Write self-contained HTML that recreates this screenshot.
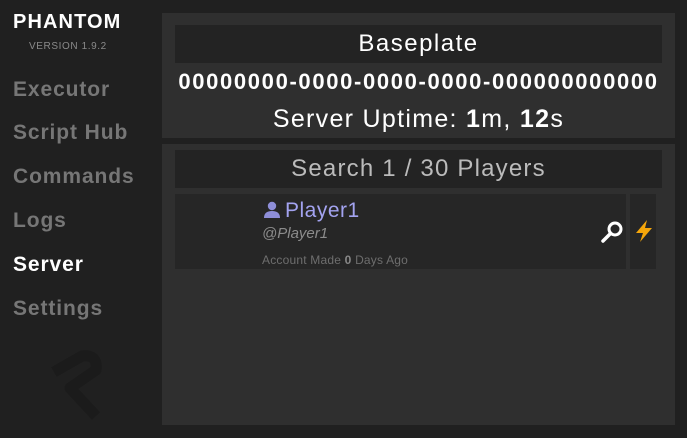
<!DOCTYPE html><html><head><style>
body{margin:0;width:687px;height:438px;background:#202020;font-family:"Liberation Sans",sans-serif;position:relative;overflow:hidden}
.a{position:absolute}
.nav{left:13px;font-size:21px;font-weight:bold;color:#767676;letter-spacing:0.9px}
</style></head><body>
<div class="a" style="left:13px;top:11px;font-size:20px;font-weight:bold;color:#fff;letter-spacing:1.1px">PHANTOM</div>
<div class="a" style="left:29px;top:41px;font-size:10px;color:#8a8a8a;letter-spacing:0.6px">VERSION 1.9.2</div>
<div class="a nav" style="top:78px">Executor</div>
<div class="a nav" style="top:121px">Script Hub</div>
<div class="a nav" style="top:165px">Commands</div>
<div class="a nav" style="top:209px">Logs</div>
<div class="a nav" style="top:253px;color:#fff">Server</div>
<div class="a nav" style="top:297px">Settings</div>
<svg class="a" style="left:40px;top:340px" width="70" height="85"><path d="M14 32 L42 16 Q58 14 56 30 L30 48 L56 76" stroke="#1b1b1b" stroke-width="11" fill="none" stroke-linejoin="round"/></svg>
<div class="a" style="left:162px;top:13px;width:513px;height:125px;background:#2f2f2f"></div>
<div class="a" style="left:175px;top:25px;width:487px;height:38px;background:#232323;color:#fff;font-size:24px;text-align:center;line-height:38px;letter-spacing:1.5px">Baseplate</div>
<div class="a" style="left:162px;top:69px;width:513px;text-align:center;color:#fff;font-size:22px;font-weight:bold;letter-spacing:1.65px">00000000-0000-0000-0000-000000000000</div>
<div class="a" style="left:162px;top:105px;width:513px;text-align:center;color:#fff;font-size:25px;letter-spacing:1.3px">Server Uptime: <b>1</b>m, <b>12</b>s</div>
<div class="a" style="left:162px;top:144px;width:513px;height:281px;background:#2f2f2f"></div>
<div class="a" style="left:175px;top:150px;width:487px;height:38px;background:#232323;color:#bbb;font-size:24px;text-align:center;line-height:38px;letter-spacing:1.2px">Search 1 / 30 Players</div>
<div class="a" style="left:175px;top:194px;width:425px;height:75px;background:#262626"></div>
<div class="a" style="left:600px;top:194px;width:26px;height:75px;background:#262626"></div>
<div class="a" style="left:630px;top:194px;width:26px;height:75px;background:#262626"></div>
<svg class="a" style="left:263px;top:201px" width="18" height="18"><circle cx="9" cy="5" r="4.2" fill="#8e8ed8"/><path d="M1 17 Q1 10 9 10 Q17 10 17 17Z" fill="#8e8ed8"/></svg>
<div class="a" style="left:285px;top:199px;font-size:21px;color:#a3a3f0;letter-spacing:0.5px">Player1</div>
<div class="a" style="left:262px;top:225px;font-size:15px;color:#8c8c8c;font-style:italic">@Player1</div>
<div class="a" style="left:262px;top:253px;font-size:12px;color:#6e6e6e;letter-spacing:0.2px">Account Made <b style="color:#888">0</b> Days Ago</div>
<svg class="a" style="left:600px;top:219px" width="26" height="26"><circle cx="15" cy="10" r="6" stroke="#fff" stroke-width="3" fill="none"/><path d="M10.5 14.5 L3 22" stroke="#fff" stroke-width="3.5" stroke-linecap="round"/></svg>
<svg class="a" style="left:631px;top:218px" width="26" height="26"><path d="M16 2 L5 15 L12 15 L9 24 L21 10 L14 10 Z" fill="#f5a60a"/></svg>
</body></html>
